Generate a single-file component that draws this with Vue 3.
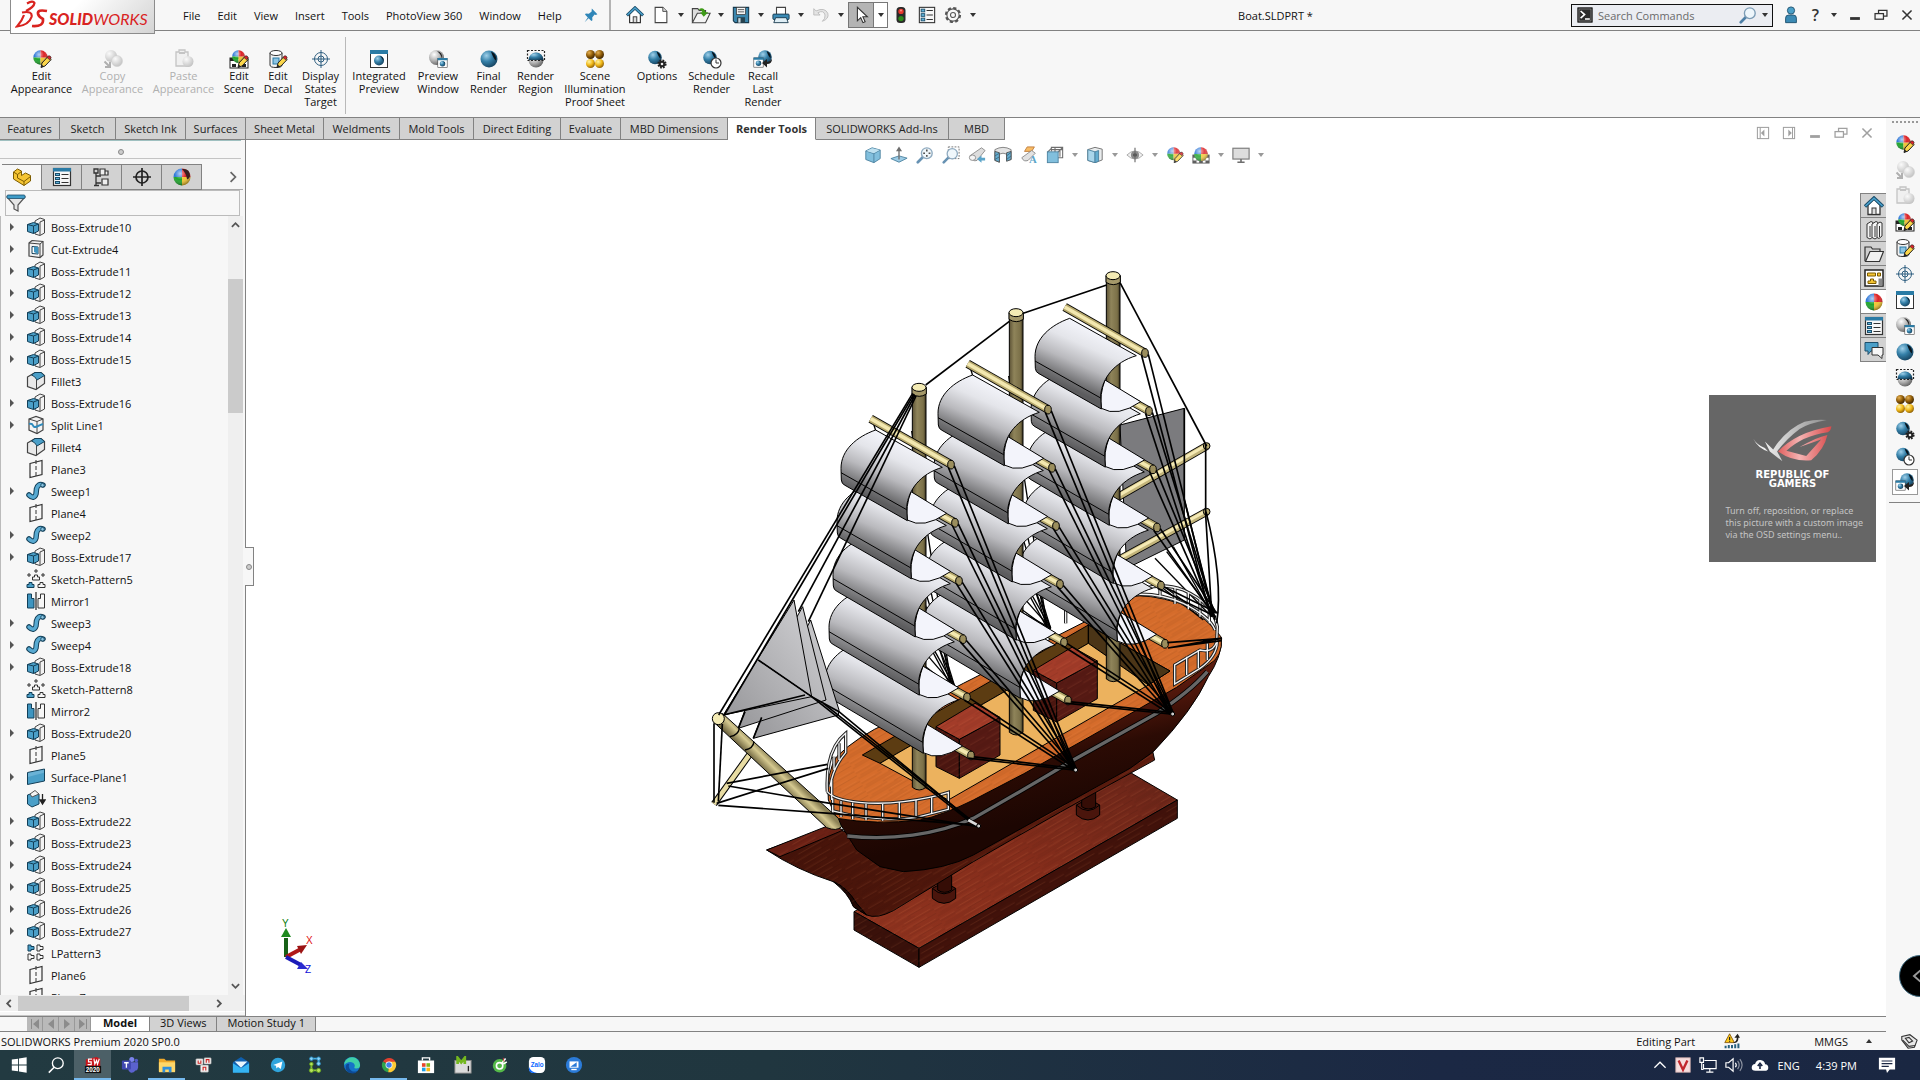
<template>
  <div class="app">
    <svg class="defs" width="0" height="0" aria-hidden="true">
      <defs>
        <radialGradient id="gBlue" cx=".35" cy=".3" r=".8">
          <stop offset="0" stop-color="#9fd0ea" /><stop offset=".45" stop-color="#3580a8" /><stop offset="1" stop-color="#123a55" />
        </radialGradient>
        <radialGradient id="gGrey" cx=".35" cy=".3" r=".8">
          <stop offset="0" stop-color="#fff" /><stop offset=".5" stop-color="#b4b4b4" /><stop offset="1" stop-color="#555" />
        </radialGradient>
        <radialGradient id="gFade" cx=".35" cy=".3" r=".8">
          <stop offset="0" stop-color="#fafafa" /><stop offset="1" stop-color="#bdbdbd" />
        </radialGradient>
        <radialGradient id="gGold" cx=".35" cy=".3" r=".8">
          <stop offset="0" stop-color="#fff3a0" /><stop offset=".5" stop-color="#f0b818" /><stop offset="1" stop-color="#7a4d00" />
        </radialGradient>
        <radialGradient id="gBrown" cx=".35" cy=".3" r=".8">
          <stop offset="0" stop-color="#e6b050" /><stop offset=".5" stop-color="#8f5c08" /><stop offset="1" stop-color="#2c1800" />
        </radialGradient>
        <radialGradient id="gShine" cx=".4" cy=".3" r=".7">
          <stop offset="0" stop-color="#fff" stop-opacity=".65" /><stop offset=".5" stop-color="#fff" stop-opacity="0" /><stop offset="1" stop-color="#000" stop-opacity=".4" />
        </radialGradient>
      </defs>

      <!-- shared parts -->
      <symbol id="p-pencil" viewBox="0 0 20 20">
        <path d="M9 18.500l1-4.500 6-6.500 3.200 3-6.200 6.500z" fill="#fbd64a" stroke="#222" stroke-width="1" />
        <path d="M15 8.500l1.500-1.700q2-.6 2.700 2l-1.500 2z" fill="#d8242c" stroke="#222" stroke-width=".6" />
        <path d="M9 18.500l.7-3 2.300 1.900z" fill="#222" />
      </symbol>
      <symbol id="i-ball" viewBox="0 0 20 20">
        <path d="M10 10V1.500A8.500 8.500 0 0 0 1.500 10Z" fill="#2f78d8" />
        <path d="M10 10H1.500A8.500 8.500 0 0 0 10 18.500Z" fill="#1fa52c" />
        <path d="M10 10V18.500A8.500 8.500 0 0 0 18.500 10Z" fill="#f2c531" />
        <path d="M10 10H18.500A8.500 8.500 0 0 0 10 1.500Z" fill="#dc2226" />
        <circle cx="10" cy="10" r="8.500" fill="url(#gShine)" />
      </symbol>
      <symbol id="p-window" viewBox="0 0 20 20">
        <rect x="1.500" y="1.500" width="17" height="17" fill="#fff" stroke="#333" />
        <rect x="1" y="1" width="18" height="4" fill="#2a7ba5" />
        <circle cx="10" cy="11.500" r="5" fill="url(#gBlue)" />
        <path d="M11 7q4 1 3.500 5-1-3-3.500-5z" fill="#0a1a26" />
      </symbol>

      <!-- title bar -->
      <symbol id="i-home" viewBox="0 0 20 20">
        <path d="M4 9v9.500h12V9l-6-6z" fill="#fff" stroke="#333" stroke-width="1.300" />
        <rect x="8" y="12" width="4" height="6.500" fill="#ddd" stroke="#333" />
        <path d="M1 10.500L10 2l9 8.500" fill="none" stroke="#1d4f6c" stroke-width="3.400" />
        <path d="M1.500 10L10 2.200 18.500 10" fill="none" stroke="#4ba3cf" stroke-width="1.500" />
      </symbol>
      <symbol id="i-new" viewBox="0 0 20 20">
        <path d="M3.500 1.500h8.500l4.500 4.500v12.500h-13z" fill="#fff" stroke="#444" stroke-width="1.200" />
        <path d="M12 1.500v4.500h4.500" fill="#ddd" stroke="#444" />
      </symbol>
      <symbol id="i-open" viewBox="0 0 22 20">
        <path d="M1.500 18V3h6l1.500 2h7v3" fill="#ddd" stroke="#444" stroke-width="1.200" />
        <path d="M1.500 18.500L7 8h14l-5 10.500z" fill="#f4f4f4" stroke="#444" stroke-width="1.200" />
        <path d="M8 4q6-4 8 3h3l-5 5-4-5h2.500q-1-3-4.500-3z" fill="#3f9b17" />
      </symbol>
      <symbol id="i-save" viewBox="0 0 20 20">
        <path d="M1.500 1.500h17v17h-15l-2-2z" fill="#3b86ad" stroke="#16384c" stroke-width="1.200" />
        <rect x="5" y="1.500" width="10" height="8" fill="#f5f5f5" stroke="#333" stroke-width=".8" />
        <path d="M6.500 4h7M6.500 6.500h7" stroke="#555" />
        <rect x="5.500" y="12.500" width="9" height="6" fill="#27434f" />
        <rect x="7" y="13.500" width="2.500" height="5" fill="#c9d7de" />
      </symbol>
      <symbol id="i-print" viewBox="0 0 20 20">
        <path d="M5 9V1.500h10V9" fill="#fff" stroke="#444" stroke-width="1.200" />
        <rect x="1" y="9" width="18" height="6" rx="1" fill="#3b8ab4" stroke="#16384c" />
        <path d="M4 13h12l2 5.500H2z" fill="#dfeef5" stroke="#16384c" />
      </symbol>
      <symbol id="i-undo" viewBox="0 0 20 20">
        <path d="M2 3v7h7L6.500 7.500Q13 4 14.500 10q.5 4-3 7 8-3 6-9Q14 1 4.500 5.500z" fill="#e4e4e4" stroke="#bbb" />
      </symbol>
      <symbol id="i-cursor" viewBox="0 0 20 20">
        <path d="M6 1.500v15l3.700-3.500 2.500 5.500 2.400-1-2.500-5.500h5z" fill="#fff" stroke="#333" stroke-width="1.200" />
      </symbol>
      <symbol id="i-light" viewBox="0 0 20 20">
        <rect x="5" y="1" width="10" height="18" rx="4" fill="#2a2a2a" />
        <circle cx="10" cy="6" r="3" fill="#e8362c" /><circle cx="10" cy="14" r="3" fill="#2e8a1c" />
        <circle cx="10" cy="5" r="1" fill="#ff9a90" />
      </symbol>
      <symbol id="i-props" viewBox="0 0 20 20">
        <rect x="1.500" y="1.500" width="17" height="17" fill="#f7f7f7" stroke="#333" stroke-width="1.200" />
        <g fill="#5fb2da" stroke="#1d4f6c"><rect x="3.500" y="3.500" width="4" height="3" /><rect x="3.500" y="8.500" width="4" height="3" /><rect x="3.500" y="13.500" width="4" height="3" /></g>
        <path d="M9.500 5h7M9.500 10h7M9.500 15h7" stroke="#333" stroke-width="1.200" />
      </symbol>
      <symbol id="i-panel" viewBox="0 0 20 20">
        <rect x="1.500" y="1.500" width="17" height="17" fill="#f7f7f7" stroke="#333" stroke-width="1.200" />
        <rect x="1" y="1" width="18" height="3.500" fill="#2a7ba5" />
        <g fill="#5fb2da" stroke="#1d4f6c"><rect x="3.500" y="6.500" width="4" height="2" /><rect x="3.500" y="10.500" width="4" height="2" /><rect x="3.500" y="14.500" width="4" height="2" /></g>
        <path d="M9.500 7.500h7M9.500 11.500h7M9.500 15.500h7" stroke="#333" stroke-width="1.200" />
      </symbol>
      <symbol id="i-gear" viewBox="0 0 20 20">
        <circle cx="10" cy="10" r="7.500" fill="none" stroke="#555" stroke-width="3" stroke-dasharray="3.400 2.490" />
        <circle cx="10" cy="10" r="6.800" fill="#f7f7f7" stroke="#555" stroke-width="1.200" />
        <circle cx="10" cy="10" r="2.800" fill="none" stroke="#555" stroke-width="1.200" />
      </symbol>
      <symbol id="i-pin" viewBox="0 0 20 20">
        <path d="M11 2l7 7-2 1-1.500-.5-3 3.500.3 3.500-1.300 1-3.500-3.500L2 19l4-6-3.500-3.500 1-1.300 3.800.3 3.500-3z" fill="#2f86b8" />
      </symbol>
      <symbol id="i-user" viewBox="0 0 20 20">
        <circle cx="10" cy="5" r="4" fill="#4ba0c8" stroke="#1d4f6c" />
        <path d="M4 18.500v-5q0-3.500 3.500-3.500h5q3.500 0 3.500 3.500v5z" fill="#3b8ab4" stroke="#1d4f6c" />
      </symbol>
      <symbol id="i-mag" viewBox="0 0 20 20">
        <path d="M8 12l-6 6" stroke="#4d7fa6" stroke-width="3" stroke-linecap="round" />
        <circle cx="12" cy="8" r="6" fill="#eef6fb" stroke="#7c9cb5" stroke-width="1.500" />
      </symbol>
      <symbol id="i-prompt" viewBox="0 0 20 20">
        <rect x="1" y="1" width="18" height="18" fill="#2a2a2a" stroke="#111" /><rect x="2.500" y="2.500" width="15" height="15" fill="none" stroke="#999" stroke-width=".8" />
        <path d="M4.500 5l5 4.500-5 4.500M10 15h6" fill="none" stroke="#fff" stroke-width="2" />
      </symbol>
      <symbol id="i-min" viewBox="0 0 20 20"><rect x="3" y="13" width="14" height="4" fill="currentColor" /></symbol>
      <symbol id="i-restore" viewBox="0 0 20 20">
        <path d="M6.500 7V3.500h12v8H14" fill="none" stroke="currentColor" stroke-width="1.800" /><rect x="1.500" y="8" width="12" height="8" fill="none" stroke="currentColor" stroke-width="1.800" />
      </symbol>
      <symbol id="i-close" viewBox="0 0 20 20"><path d="M3.500 3.500l13 13M16.500 3.500l-13 13" stroke="currentColor" stroke-width="2.200" /></symbol>
      <symbol id="i-paneL" viewBox="0 0 20 20"><rect x="2" y="2" width="16" height="16" fill="none" stroke="currentColor" stroke-width="1.500" /><path d="M6 2v16" stroke="currentColor" stroke-width="1.500" /><path d="M12 5v10l-5-5z" fill="currentColor" /></symbol>
      <symbol id="i-paneR" viewBox="0 0 20 20"><rect x="2" y="2" width="16" height="16" fill="none" stroke="currentColor" stroke-width="1.500" /><path d="M15 2v16" stroke="currentColor" stroke-width="1.500" /><path d="M9 5v10l5-5z" fill="currentColor" /></symbol>

      <!-- render tools -->
      <symbol id="i-editapp" viewBox="0 0 20 20"><use href="#i-ball" width="17" height="17" /><use href="#p-pencil" width="20" height="20" /></symbol>
      <symbol id="i-copyapp" viewBox="0 0 20 20">
        <circle cx="8" cy="7" r="6" fill="url(#gFade)" /><circle cx="14" cy="12" r="5.500" fill="url(#gFade)" stroke="#ccc" stroke-width=".5" />
        <path d="M1.500 12.500l5 5M7 13v5H2" fill="none" stroke="#b0b0b0" stroke-width="2" />
      </symbol>
      <symbol id="i-pasteapp" viewBox="0 0 20 20">
        <path d="M2 3h3V1h6v2h3v14H2z" fill="#f0f0f0" stroke="#c4c4c4" stroke-width="1.300" /><path d="M5 4h6" stroke="#c4c4c4" stroke-width="2" />
        <circle cx="14" cy="12.500" r="5.500" fill="url(#gFade)" />
      </symbol>
      <symbol id="i-editscene" viewBox="0 0 20 20">
        <rect x="1" y="9" width="18" height="10" fill="#fff" stroke="#222" /><path d="M1 9h4v3H1zM3 15h4v3H3zM15 9h4v3h-4zM13 15h4v3h-4z" fill="#222" />
        <use href="#i-ball" x="2" width="15" height="15" /><use href="#p-pencil" width="20" height="20" />
      </symbol>
      <symbol id="i-scene" viewBox="0 0 20 20">
        <rect x="1" y="10" width="18" height="9" fill="#fff" stroke="#444" /><path d="M1 10h4v3H1zM5 13h3v3H5zM1 16h4v3H1zM8 16h4v3H8zM12 13h3v3h-3zM15 10h4v3h-4zM15 16h4v3h-4z" fill="#444" />
        <use href="#i-ball" x="1" width="18" height="18" />
      </symbol>
      <symbol id="i-editdecal" viewBox="0 0 20 20">
        <path d="M2 4v12q0 2.500 6 2.500t6-2.500V4" fill="#f2f2f2" stroke="#333" /><ellipse cx="8" cy="4" rx="6" ry="2.500" fill="#fff" stroke="#333" />
        <rect x="5" y="9" width="6" height="6" fill="#8cc4e2" stroke="#2a7ba5" /><use href="#p-pencil" width="20" height="20" />
      </symbol>
      <symbol id="i-target" viewBox="0 0 20 20">
        <g fill="none" stroke="#2f5f80"><circle cx="10" cy="10" r="6.500" /><circle cx="10" cy="10" r="3" /><path d="M10 1v18M1 10h18" /></g>
      </symbol>
      <symbol id="i-prevwin" viewBox="0 0 20 20">
        <circle cx="8.500" cy="8.500" r="7.500" fill="url(#gGrey)" /><path d="M9 2q6 1 5 8-1-5-5-8z" fill="#222" /><use href="#p-window" x="9" y="8.500" width="11" height="11" />
      </symbol>
      <symbol id="i-final" viewBox="0 0 20 20">
        <circle cx="10" cy="10" r="8.500" fill="url(#gBlue)" /><path d="M12 2.500q6 2.500 5 9-2.500-1.500-5-9z" fill="#08131c" />
      </symbol>
      <symbol id="i-region" viewBox="0 0 20 20">
        <circle cx="10" cy="11" r="7.500" fill="url(#gGrey)" /><path d="M2.500 11a7.500 7.500 0 0 1 15 0z" fill="url(#gBlue)" />
        <rect x="1.500" y="1.500" width="17" height="10" fill="none" stroke="#222" stroke-dasharray="2 1.500" stroke-width="1.200" />
      </symbol>
      <symbol id="i-illum" viewBox="0 0 20 20">
        <circle cx="5.500" cy="5.500" r="4.500" fill="url(#gBrown)" /><circle cx="14.500" cy="5.500" r="4.500" fill="url(#gBrown)" />
        <circle cx="5.500" cy="14.500" r="4.500" fill="url(#gGold)" /><circle cx="14.500" cy="14.500" r="4.500" fill="url(#gGold)" />
      </symbol>
      <symbol id="i-options" viewBox="0 0 20 20">
        <use href="#i-final" width="16" height="17" /><circle cx="15" cy="15" r="3.600" fill="none" stroke="#222" stroke-width="2" stroke-dasharray="1.700 1.130" /><circle cx="15" cy="15" r="2.300" fill="#eee" stroke="#222" stroke-width="2" />
      </symbol>
      <symbol id="i-schedule" viewBox="0 0 20 20">
        <use href="#i-final" width="16" height="17" /><circle cx="14" cy="14" r="5" fill="#fff" stroke="#333" stroke-width="1.200" /><path d="M14 10.500V14h3" fill="none" stroke="#333" />
      </symbol>
      <symbol id="i-recall" viewBox="0 0 20 20">
        <use href="#i-final" x="4" width="16" height="16" /><use href="#p-window" y="8" width="11" height="11" /><path d="M19 10q0 5-5 5v3.500L9 14l5-4v3q3 0 5-3z" fill="#222" />
      </symbol>

      <!-- feature tree -->
      <symbol id="t-boss" viewBox="0 0 20 20">
        <path d="M9 4l5-3 4.500 1.500V16L14 18.500 9 17z" fill="#f3f3f3" stroke="#444" /><path d="M14 5l4.500-2M14 5v13" stroke="#444" fill="none" />
        <path d="M1.500 7.500l6-2 5 1.500v7l-5 2.500-6-2z" fill="#4a9fc8" stroke="#123f58" /><path d="M1.500 7.500l6 1.500 5-2M7.500 9v7.500" fill="none" stroke="#123f58" />
      </symbol>
      <symbol id="t-cut" viewBox="0 0 20 20">
        <path d="M3 4l3-2.500 11 1V16l-3 2.500L3 17z" fill="#f3f3f3" stroke="#444" stroke-width="1.200" /><path d="M3 4l11 1v13M14 5l3-2.500" fill="none" stroke="#444" />
        <path d="M6 7.500l6 .5v7l-6-.5z" fill="#fff" stroke="#123f58" /><path d="M8 7.800l4 .2v7l-4-2z" fill="#3f95c0" />
      </symbol>
      <symbol id="t-fillet" viewBox="0 0 20 20">
        <path d="M1.500 6L9 1.500h6l3.500 3v8L10 18.500l-8.500-3z" fill="#e9e9e9" stroke="#444" stroke-width="1.200" />
        <path d="M9 1.500h6l3.500 3L11 9Q9 5 5.500 4z" fill="#4a9fc8" stroke="#123f58" /><path d="M10.500 9v9" stroke="#444" />
      </symbol>
      <symbol id="t-split" viewBox="0 0 20 20">
        <path d="M3 4l7-2.500L17 4v11l-6 3.500L3 15z" fill="#f3f3f3" stroke="#444" stroke-width="1.200" /><path d="M3 4l8 2.500L17 4M11 6.500v12" fill="none" stroke="#444" />
        <path d="M3 9q3-1 4 1.500t4 1 6-2.500" fill="none" stroke="#2f8abb" stroke-width="2" />
      </symbol>
      <symbol id="t-plane" viewBox="0 0 20 20">
        <path d="M4 4.500L16 1.500v14L4 18.500z" fill="none" stroke="#333" stroke-width="1.200" /><path d="M10 1v18" stroke="#333" stroke-dasharray="4 2" />
      </symbol>
      <symbol id="t-sweep" viewBox="0 0 20 20">
        <path d="M3 14q5 5 7-1l.5-5Q12 2 17 4" fill="none" stroke="#123f58" stroke-width="5.500" stroke-linecap="round" />
        <path d="M3 14q5 5 7-1l.5-5Q12 2 17 4" fill="none" stroke="#58aad2" stroke-width="3.500" stroke-linecap="round" />
        <circle cx="16.500" cy="4.200" r="1.800" fill="#8ac6e4" stroke="#123f58" stroke-width=".8" />
      </symbol>
      <symbol id="t-skpat" viewBox="0 0 20 20">
        <path d="M1 18.500v-3h2v-2h3v2h2v3z" fill="#4a9fc8" stroke="#123f58" /><g fill="#f7f7f7" stroke="#333"><path d="M12 18.500v-3h2v-2h3v2h2v3zM6.500 11V8h2V6h3v2h2v3z" /><path d="M9 1h2v2H9zM2 5h2v2H2zM16 5h2v2h-2z" /></g>
      </symbol>
      <symbol id="t-mirror" viewBox="0 0 20 20">
        <path d="M1.500 3h4v4.500H8V17H1.500z" fill="#3f95c0" stroke="#123f58" /><path d="M10 1v18" stroke="#222" stroke-width="1.200" /><path d="M18.500 3h-4v4.500H12V17h6.500z" fill="#f7f7f7" stroke="#333" />
      </symbol>
      <symbol id="t-surf" viewBox="0 0 20 20"><path d="M1.500 5.500L18.500 2v12L1.500 17.500z" fill="#4a9fc8" stroke="#123f58" /><path d="M2 6l16-3.300v3L2 10z" fill="#8ac6e4" opacity=".5" /></symbol>
      <symbol id="t-thicken" viewBox="0 0 20 20">
        <path d="M1.500 6L7 4l6 1v10l-7 3-4.500-3z" fill="#4a9fc8" stroke="#123f58" /><path d="M4 5l5-3.500 4 3.500-7 3z" fill="#f3f3f3" stroke="#555" /><path d="M16.500 5v9M14 11l2.500 4 2.500-4z" stroke="#222" fill="#222" stroke-width="1.300" />
      </symbol>
      <symbol id="t-lpat" viewBox="0 0 20 20">
        <path d="M2 2h3v1.500h3v3H5V8H2z" fill="#4a9fc8" stroke="#123f58" /><g fill="#f7f7f7" stroke="#333"><path d="M11 2h3v1.500h3v3h-3V8h-3zM2 11h3v1.500h3v3H5V17H2zM11 11h3v1.500h3v3h-3V17h-3z" /></g>
      </symbol>
      <symbol id="i-part" viewBox="0 0 20 20">
        <path d="M1.500 5l4-3 4 2v4.500l4-2.500 5 2.500v5.500L12 18.500 1.500 12z" fill="#f5c534" stroke="#7d5c00" /><path d="M1.500 5l4 2.500 4-3M5.500 7.500v3.500l6.500 3.500 6.500-5M12 14.500v4" fill="none" stroke="#7d5c00" />
      </symbol>
      <symbol id="i-config" viewBox="0 0 20 20">
        <path d="M2 2h4v4H2zM4 6v12M4 9h5M4 16h5M2 18.500h5" fill="none" stroke="#333" stroke-width="1.300" /><g fill="#eee" stroke="#333" stroke-width="1.200"><path d="M8 2h5v6H8zM10 12h6v6h-6zM13 4h3v4h-3z" /></g>
      </symbol>
      <symbol id="i-cross" viewBox="0 0 20 20"><g fill="none" stroke="#222" stroke-width="1.700"><circle cx="10" cy="10" r="6" /><path d="M10 1v18M1 10h18" /></g></symbol>
      <symbol id="i-appear" viewBox="0 0 20 20"><use href="#i-ball" width="20" height="20" /><path d="M10 2q8-1 8 7-1 4-3 3-1-6-5-10z" fill="#3a2020" /></symbol>
      <symbol id="i-filter" viewBox="0 0 20 20">
        <path d="M1 4h18l-7 8v6l-4-2v-4z" fill="#e6e6e6" stroke="#555" stroke-width="1.200" /><rect x="1" y="2" width="18" height="3.500" rx="1" fill="#3f9cc8" stroke="#1d4f6c" stroke-width=".8" />
      </symbol>

      <!-- heads-up view toolbar -->
      <symbol id="v-cube" viewBox="0 0 20 20"><path d="M2 5.500L9 2l9 2.500v9.500L11 18.500 2 15z" fill="#6cb4d8" stroke="#2c6c8f" /><path d="M2 5.500l9 3v10M11 8.500l7-4" fill="none" stroke="#2c6c8f" /><path d="M2.500 5.500L9 2.500l8.500 2-6.500 3.500z" fill="#b5dcee" /></symbol>
      <symbol id="v-normal" viewBox="0 0 20 20"><path d="M1 14l9-3 9 2.500-9 4.500z" fill="#8cc4e2" stroke="#2c6c8f" /><path d="M10 15V3M8 5l2-3 2 3z" stroke="#555" stroke-width="1.500" fill="#555" /></symbol>
      <symbol id="v-fit" viewBox="0 0 20 20"><use href="#i-mag" width="20" height="20" /><path d="M12 4v2M12 10v2M8 8h2M14 8h2" stroke="#333" stroke-width="1.800" /></symbol>
      <symbol id="v-area" viewBox="0 0 20 20"><rect x="7" y="1" width="12" height="13" fill="none" stroke="#555" stroke-dasharray="2 1.500" /><use href="#i-mag" y="1" width="19" height="19" /></symbol>
      <symbol id="v-prev" viewBox="0 0 20 20"><path d="M2 11L15 2l4 3-9 11q-5 2-8-5z" fill="#d8d8d8" stroke="#777" /><ellipse cx="5" cy="13" rx="3.500" ry="3" fill="#f4f4f4" stroke="#777" /><path d="M19 13v3h-4v2.500L10 14.500l5-4V13z" fill="#3f95c0" /></symbol>
      <symbol id="v-section" viewBox="0 0 20 20"><path d="M1 4q9-5 18 0v11l-5 1V9q-4-2-8 0v9l-5-2z" fill="#e0e0e0" stroke="#666" /><path d="M1 6l5 1.500V18l-5-2zM14 7.500L19 6v9l-5 2z" fill="#4a9fc8" stroke="#333" /><path d="M1 11l5-3M1 15l5-3M14 11l5-4M14 15l5-4" stroke="#1b4f6b" /></symbol>
      <symbol id="v-orient" viewBox="0 0 20 20"><path d="M6 6V1.500h12.500V13H13M1.500 7l5-5M13 7l5-5M10 1.500v6M6 4h12M15.500 4v8" fill="none" stroke="#555" stroke-width="1.200" /><rect x="1.500" y="6.500" width="12" height="12" fill="#6cb4d8" stroke="#2c6c8f" /></symbol>
      <symbol id="v-style" viewBox="0 0 20 20"><path d="M2 4l8-2.500 8 2v12l-8 3-8-2.500z" fill="#e6e9ea" stroke="#555" /><path d="M2 4l8 2.500v12L2 16z" fill="#9cd0e8" stroke="#2c6c8f" /><path d="M10 6.500L14 5v12l-4 1.500z" fill="#4a9fc8" stroke="#2c6c8f" /></symbol>
      <symbol id="v-eye" viewBox="0 0 20 20"><path d="M1 10q9-9 18 0-9 9-18 0z" fill="#eee" stroke="#999" /><circle cx="10" cy="10" r="4.500" fill="#777" /><circle cx="10" cy="10" r="2" fill="#222" /><path d="M10 2v16" stroke="#555" stroke-width="1.300" /></symbol>
      <symbol id="v-monitor" viewBox="0 0 20 20"><rect x="1" y="2.500" width="18" height="12" fill="#d8d8d8" stroke="#666" stroke-width="1.300" /><path d="M10 14.500V18M6 18h8" stroke="#555" stroke-width="1.800" /></symbol>

      <!-- task pane -->
      <symbol id="k-books" viewBox="0 0 20 20"><g fill="#f4f4f4" stroke="#333"><path d="M3 4l4-2.500 2 1V17L6 19l-3-1.500z" /><path d="M8 4l4-2.500 2 1V17l-3 2-3-1.500z" /><path d="M13 4l3-2 2 1v13l-3 2.500-2-1z" /></g><path d="M6 6v11M11 6v11M15.500 6v11" stroke="#333" /></symbol>
      <symbol id="k-folder" viewBox="0 0 20 20"><path d="M1 17V3h6l1.500 2H16v3" fill="#d0d0d0" stroke="#333" stroke-width="1.200" /><path d="M1.500 17.500L6 7.500h13.500l-4 10z" fill="#f1f1f1" stroke="#333" stroke-width="1.200" /></symbol>
      <symbol id="k-palette" viewBox="0 0 20 20"><rect x="1" y="2" width="18" height="16" fill="#fff" stroke="#222" stroke-width="1.500" /><path d="M3.500 5h8v3h-8zM13.500 5h3v3h-3zM4 15.500v-2.500h2.500v-2h3v2H12v2.500z" fill="#f5c534" stroke="#7d5c00" /><rect x="14.500" y="10.500" width="4" height="7.500" fill="#888" /></symbol>
      <symbol id="k-chat" viewBox="0 0 20 20"><path d="M1 2.500h13v8.500H7L4 14.500V11H1z" fill="#4a9fc8" stroke="#1d4f6c" /><path d="M8 7.500h11v7.500h-1v3.500L14 15H8z" fill="#f7f7f7" stroke="#333" /></symbol>

      <!-- taskbar -->
      <symbol id="w-start" viewBox="0 0 20 20"><path d="M2 4l7-1v6.500H2zM10 2.800L18.500 1.500v8H10zM2 10.500h7V17l-7-1zM10 10.500h8.500v8L10 17.200z" fill="#fff" /></symbol>
      <symbol id="w-search" viewBox="0 0 20 20"><circle cx="12" cy="8" r="6" fill="none" stroke="#fff" stroke-width="1.500" /><path d="M8 12.500L2 18.500" stroke="#fff" stroke-width="1.700" /></symbol>
      <symbol id="w-teams" viewBox="0 0 20 20"><circle cx="12" cy="4" r="2.800" fill="#7b83eb" /><circle cx="17" cy="5" r="2" fill="#5059c9" /><path d="M8 7h11v6q-1 4-3 3-2 3-5 2.500-3-1-3-4z" fill="#5b62cf" /><rect x="1" y="5" width="10" height="10" rx="1" fill="#4048b0" /><path d="M3.500 7.500h5M6 7.500v5.500" stroke="#fff" stroke-width="1.500" /></symbol>
      <symbol id="w-explorer" viewBox="0 0 20 20"><path d="M1 3h6l2 2h10v12H1z" fill="#f0a92a" /><path d="M1 7h18v11H1z" fill="#ffd769" /><path d="M5 18v-6h10v6h-3v-3H8v3z" fill="#2f8fdd" /></symbol>
      <symbol id="w-keys" viewBox="0 0 20 20"><g fill="#f1f1f1" stroke="#888" stroke-width=".6"><rect x="1" y="3" width="8" height="7" rx="1" /><rect x="10" y="2" width="8" height="7" rx="1" /><rect x="6" y="10" width="9" height="8" rx="1" /></g><path d="M3.500 5v3h3V5M12.500 7.500V4h3v3.500M9 16v-3.500h3V16" fill="none" stroke="#c22" stroke-width="1.200" /></symbol>
      <symbol id="w-mail" viewBox="0 0 20 20"><path d="M1 7l9-6 9 6v11H1z" fill="#0f5fae" /><path d="M1 8l9 5.500L19 8v10.500H1z" fill="#35b4f2" /><path d="M3 6h14l-7 7z" fill="#e9f6fd" /></symbol>
      <symbol id="w-tele" viewBox="0 0 20 20"><circle cx="10" cy="10" r="9" fill="#2fa4dc" /><path d="M4 10l11.500-4.500L13.500 15l-3.500-2.500-2 2-.5-3.500z" fill="#fff" /></symbol>
      <symbol id="w-dots" viewBox="0 0 20 20"><path d="M6 9v7h8" fill="none" stroke="#8cc63f" stroke-width="2" /><path d="M6 3h8v6" fill="none" stroke="#43b0e6" stroke-width="2" /><g fill="#8fd6f8" stroke="#2a8fc4"><circle cx="6" cy="3" r="2" /><circle cx="14" cy="3" r="2" /><circle cx="14" cy="8.500" r="2" /></g><g fill="#b6e35a" stroke="#5f9c1c"><circle cx="6" cy="9" r="2" /><circle cx="6" cy="16" r="2.300" /><circle cx="14" cy="16" r="2.300" /></g></symbol>
      <symbol id="w-edge" viewBox="0 0 20 20"><circle cx="10" cy="10" r="9" fill="#1673c8" /><path d="M1.500 7.500A9 9 0 0 1 19 10q0 4-4.500 4-2 0-2-1.500 1-1 .5-2.500Q11 6 6 7q-3 .5-4.500 3z" fill="#3fd0a8" /><path d="M7 9q-2 5 3 8 4 1 7-1-4 5-10 2.500Q1 15 4 9.500 5.500 8 7 9z" fill="#0c4a96" /></symbol>
      <symbol id="w-chrome" viewBox="0 0 20 20"><path d="M10 10L2.500 5.500A9 9 0 0 1 18 6z" fill="#e3402f" /><path d="M10 10h-1L2.300 5.500A9 9 0 0 0 9 19z" fill="#2fa24c" /><path d="M10 10l-1 9A9 9 0 0 0 18 6h-8z" fill="#fcc934" /><circle cx="10" cy="10" r="4.300" fill="#fff" /><circle cx="10" cy="10" r="3.400" fill="#3f7ee8" /></symbol>
      <symbol id="w-store" viewBox="0 0 20 20"><path d="M6 5V2h8v3" fill="none" stroke="#fff" stroke-width="1.500" /><rect x="1" y="5" width="18" height="14" fill="#fff" /><path d="M5.500 8h4v4h-4z" fill="#e8452c" /><path d="M10.500 8h4v4h-4z" fill="#7fb51c" /><path d="M5.500 13h4v4h-4z" fill="#1f9fe6" /><path d="M10.500 13h4v4h-4z" fill="#fbb714" /></symbol>
      <symbol id="w-m" viewBox="0 0 20 20"><rect x="1" y="5" width="18" height="14" fill="#dcdcdc" stroke="#888" /><path d="M4 9V2l4 5 4-5v7" fill="none" stroke="#74b81f" stroke-width="3" /><path d="M16 11v6" stroke="#222" stroke-width="1.500" /></symbol>
      <symbol id="w-coc" viewBox="0 0 20 20"><circle cx="9.500" cy="11" r="8.500" fill="#54b948" /><circle cx="9.500" cy="11" r="4" fill="none" stroke="#fff" stroke-width="2" /><path d="M12 8l5-6M14 9l4.500-3" stroke="#fff" stroke-width="2" /><path d="M14 1l1 5" stroke="#d33" /></symbol>
      <symbol id="w-blue" viewBox="0 0 20 20"><circle cx="10" cy="10" r="9" fill="#2b7bd8" /><path d="M5 6h10v7H5z" fill="#fff" /><path d="M6 12l7-5v5z" fill="#2b7bd8" /><path d="M7 15h6" stroke="#fff" stroke-width="1.500" /></symbol>
      <symbol id="s-v" viewBox="0 0 20 20"><rect x="1" y="1" width="18" height="18" fill="#f6dede" stroke="#caa" /><path d="M4.500 4.500L10 16l5.500-11.500" fill="none" stroke="#c1272d" stroke-width="3" /></symbol>
      <symbol id="s-net" viewBox="0 0 20 20"><g fill="none" stroke="#fff" stroke-width="1.300"><path d="M6 5h13v9H5V9M12 14v4M8 18h8" /><path d="M1 2h4v5H1zM3 7v8h2" /></g></symbol>
      <symbol id="s-vol" viewBox="0 0 20 20"><g fill="none" stroke="#fff" stroke-width="1.300"><path d="M1 7.500h3l5-4.500v14l-5-4.500H1z" /><path d="M11.500 7.500q2 2.500 0 5" /><path d="M14 5.500q3.500 4.500 0 9M16.500 3.500q5 6.500 0 13" opacity=".5" /></g></symbol>
      <symbol id="s-cloud" viewBox="0 0 20 20"><path d="M5 16.500Q.5 16.500.8 12.500q.3-3 3.700-3.500Q6 4 10.500 4.500t5.200 4.700q3.500.3 3.500 3.800t-4 3.500z" fill="#fff" /><path d="M10 14.500V10M7.500 11L10 8l2.500 3" fill="none" stroke="#1b2744" stroke-width="1.800" /></symbol>
      <symbol id="s-note" viewBox="0 0 20 20"><path d="M1 2h18v13h-6l-3 4-1-4H1z" fill="#fff" /><path d="M4 5.500h12M4 8.500h12M4 11.500h8" stroke="#1b2744" stroke-width="1.200" /></symbol>
    </svg>

    <header class="titlebar">
      <div class="logo">
        <svg viewBox="0 0 34 32" class="ds" fill="none" stroke="#d9231f">
          <path d="M12 3.500Q18 0 19.500 3 19 7 11 11" stroke-width="2.200" />
          <path d="M7 12.500Q18 10.500 16.500 17 14 25 2 26.500 7 21 9 15" stroke-width="2.200" />
          <path d="M32 11Q22 9 23 14 24 17 28 19 29 27 17 26" stroke-width="2.600" />
        </svg>
        <span class="brand"><b>SOLID</b>WORKS</span>
      </div>
      <nav class="menu">
        <button v-for="m in menus" :key="m">{{ m }}</button>
        <button aria-label="Pin menu"><svg class="i16"><use href="#i-pin" /></svg></button>
      </nav>
      <div class="quick">
        <template v-for="q in quick" :key="q.icon">
          <button :class="['qbtn', { sel: q.icon === 'i-cursor' }]" :aria-label="q.label"><svg :class="q.icon === 'i-open' ? 'i20' : 'i18'"><use :href="'#' + q.icon" /></svg></button>
          <button v-if="q.drop" :class="['qdrop', { boxed: q.icon === 'i-cursor' }]" :aria-label="q.label + ' menu'"><i class="caret" /></button>
        </template>
      </div>
      <div class="doc-title">Boat.SLDPRT *</div>
      <div class="search">
        <svg class="i16"><use href="#i-prompt" /></svg>
        <input type="text" placeholder="Search Commands" aria-label="Search Commands" />
        <svg class="i18"><use href="#i-mag" /></svg>
        <i class="caret" />
      </div>
      <div class="winctl">
        <button aria-label="Login"><svg class="i18"><use href="#i-user" /></svg></button>
        <button class="help">?</button>
        <i class="caret" />
        <button aria-label="Minimize"><svg class="i14"><use href="#i-min" /></svg></button>
        <button aria-label="Restore"><svg class="i14"><use href="#i-restore" /></svg></button>
        <button aria-label="Close"><svg class="i14"><use href="#i-close" /></svg></button>
      </div>
    </header>

    <section class="ribbon">
      <div v-for="(group, gi) in ribbon" :key="gi" class="rgroup">
        <button v-for="r in group" :key="r.text" class="rbtn" :disabled="r.off" :style="{ width: r.w + 'px' }">
          <svg class="i20"><use :href="'#' + r.icon" /></svg>
          <span>{{ r.text }}</span>
        </button>
      </div>
    </section>

    <div class="main">
      <div class="work">
        <div class="cmdtabs">
          <button v-for="t in tabs" :key="t.name" :class="{ active: t.name === 'Render Tools' }" :style="{ width: t.w + 'px' }">{{ t.name }}</button>
          <div class="docctl">
            <button v-for="d in ['paneL', 'paneR', 'min', 'restore', 'close']" :key="d" :aria-label="d"><svg class="i14"><use :href="'#i-' + d" /></svg></button>
          </div>
        </div>

        <div class="mid">
          <aside class="panel">
            <div class="grip"><i class="dot" /></div>
            <div class="ptabs">
              <button v-for="(p, i) in ptabs" :key="p" :class="{ active: i === 0 }" :aria-label="p"><svg class="i20"><use :href="'#' + p" /></svg></button>
              <span class="more"><svg viewBox="0 0 10 14" width="8" height="12"><path d="M2 1l6 6-6 6" fill="none" stroke="#666" stroke-width="2.200" /></svg></span>
            </div>
            <div class="filter">
              <svg class="i20"><use href="#i-filter" /></svg>
              <input type="text" aria-label="Filter" />
            </div>
            <div class="treewrap">
              <ul class="tree">
                <li v-for="(f, i) in features" :key="i">
                  <i :class="['exp', { none: !f.open }]" />
                  <svg class="i20"><use :href="'#t-' + f.icon" /></svg>
                  <span>{{ f.name }}</span>
                </li>
              </ul>
              <div class="vbar">
                <svg viewBox="0 0 10 8" width="9" height="8"><path d="M1 6l4-4 4 4" fill="none" stroke="#555" stroke-width="2" /></svg>
                <i class="vthumb" />
                <svg viewBox="0 0 10 8" width="9" height="8"><path d="M1 2l4 4 4-4" fill="none" stroke="#555" stroke-width="2" /></svg>
              </div>
            </div>
            <div class="hbar">
              <svg viewBox="0 0 8 10" width="8" height="9"><path d="M6 1L2 5l4 4" fill="none" stroke="#555" stroke-width="2" /></svg>
              <i class="hthumb" />
              <svg viewBox="0 0 8 10" width="8" height="9"><path d="M2 1l4 4-4 4" fill="none" stroke="#555" stroke-width="2" /></svg>
            </div>
            <div class="pfoot" />
            <button class="splitter" aria-label="Collapse panel"><i class="dot" /></button>
          </aside>

          <main class="canvas">
            <div class="viewbar">
              <template v-for="v in views" :key="v.icon">
                <button :aria-label="v.icon">
                  <svg v-if="v.icon === 'v-annot'" class="i18" viewBox="0 0 20 20">
                    <path d="M8 1h8l-3 5H5z" fill="#f7b04a" stroke="#b3651a" /><path d="M2 13L13 5l4 3-8 8q-5 2-7-3z" fill="#ddd" stroke="#777" />
                    <text class="annot-a" x="10" y="19">A</text>
                  </svg>
                  <svg v-else class="i18"><use :href="'#' + v.icon" /></svg>
                </button>
                <i v-if="v.drop" class="caret grey" />
              </template>
            </div>

            <svg class="ship" viewBox="42 -999 1590 2130">
              <defs>
                <linearGradient id="sail" x1=".55" y1=".1" x2=".24" y2=".72">
                  <stop offset="0" stop-color="#f4f5fb" /><stop offset=".3" stop-color="#e4e5ea" /><stop offset=".6" stop-color="#b9b9bd" /><stop offset=".9" stop-color="#6e6e70" /><stop offset="1" stop-color="#5c5c5e" />
                </linearGradient>
                <linearGradient id="pole"><stop offset="0" stop-color="#5d5336" /><stop offset=".35" stop-color="#8f845a" /><stop offset=".8" stop-color="#7b7048" /><stop offset="1" stop-color="#3b3420" /></linearGradient>
                <linearGradient id="jib" x1="1" y1="0" x2="0" y2="1"><stop offset="0" stop-color="#d0d0d3" /><stop offset="1" stop-color="#98989b" /></linearGradient>
                <linearGradient id="hull" x1=".45" y1=".35" x2=".6" y2=".75"><stop offset="0" stop-color="#5a1a0d" /><stop offset=".45" stop-color="#2b0b04" /><stop offset="1" stop-color="#1c0602" /></linearGradient>
                <linearGradient id="keel" x1="0" y1="0" x2="1" y2="0"><stop offset="0" stop-color="#441309" /><stop offset="1" stop-color="#5e1c0e" /></linearGradient>
                <linearGradient id="base" x1="0" y1="1" x2="1" y2="0"><stop offset="0" stop-color="#91341f" /><stop offset=".5" stop-color="#852d1b" /><stop offset="1" stop-color="#672418" /></linearGradient>
                <linearGradient id="sprit" gradientUnits="userSpaceOnUse" x1="250" y1="540" x2="282" y2="508"><stop offset="0" stop-color="#6e643f" /><stop offset=".6" stop-color="#d5c990" /><stop offset="1" stop-color="#8d8256" /></linearGradient>
                <pattern id="grain" width="170" height="34" patternUnits="userSpaceOnUse" patternTransform="rotate(-30)">
                  <path d="M0 3h110M60 12h110M0 20h70M90 27h80M10 31h90" stroke="#000" stroke-width="2" opacity=".1" /><path d="M70 7h90M0 15h50M50 23h90" stroke="#ff9a60" stroke-width="2" opacity=".14" />
                </pattern>
              </defs>

              <!-- stand -->
              <g stroke="#000" stroke-width="3" stroke-linejoin="round">
                <path d="M492 935L1290 500 1325 520 1462 600 687 1045z" fill="url(#base)" />
                <path d="M492 935L687 1045V1102L492 990z" fill="#3a110a" />
                <path d="M687 1045L1462 600V655L687 1102z" fill="#42120a" />
                <path d="M492 935L1290 500 1325 520 1462 600V655L687 1102 492 990z" fill="url(#grain)" stroke="none" />
                <g v-for="p in [[727, 870], [1159, 620]]" :key="p[0]" :transform="`translate(${p[0]} ${p[1]})`">
                  <path d="M0 -5V25Q35 55 70 25V-5Q35 -30 0 -5z" fill="#4a150c" /><path d="M0 -5Q35 28 70 -5" fill="none" />
                  <path d="M16 -45V0Q36 14 58 0V-45z" fill="#350d06" />
                </g>
              </g>

              <!-- keel and hull -->
              <g stroke="#000" stroke-width="3" stroke-linejoin="round">
                <path d="M230 750L420 680 480 700 570 800 1385 440 1394 480Q1100 640 850 785L610 932Q560 958 530 945L492 922Q470 860 430 845 320 810 230 750z" fill="url(#keel)" />
                <path d="M430 845Q470 860 500 910L530 945 490 920Q475 880 430 845z" fill="#200703" />
                <path d="M230 750L420 675 460 690 270 770z" fill="#6c2115" />
                <path d="M230 750L420 680 480 700 570 800 1385 440 1394 480Q1100 640 850 785L610 932Q560 958 530 945L492 922Q470 860 430 845 320 810 230 750z" fill="url(#grain)" stroke="none" />
                <path d="M1595 115Q1595 170 1555 230 1510 330 1390 455L1320 505 850 765Q770 808 640 815L570 800 500 750 440 655 700 600 1460 230z" fill="url(#hull)" />
                <path d="M415 600Q408 520 440 470 500 410 600 365L820 250 1195 60 1320 -10Q1370 -20 1470 10 1560 60 1594 112 1600 170 1555 195L1460 262 1200 410 1000 522 850 600Q760 645 690 660 560 675 440 655z" fill="#d56c2b" />
                <path d="M415 600Q408 520 440 470 500 410 600 365L820 250 1195 60 1320 -10Q1370 -20 1470 10 1560 60 1594 112 1600 170 1555 195L1460 262 1200 410 1000 522 850 600Q760 645 690 660 560 675 440 655z" fill="url(#grain)" stroke="none" />
                <path d="M517 465L1195 75 1440 213 1375 255 1195 130 570 490z" fill="#5c3c12" />
                <path d="M1195 75L1440 213 1375 255 1195 130z" fill="#4b3517" />
                <path d="M570 490L1195 130 1375 255 775 600z" fill="#ecb25e" />
                <path d="M1195 75V130" />
              </g>
              <path d="M472 708C600 722 740 705 850 655Q1000 570 1150 480L1400 340Q1500 275 1552 215" fill="none" stroke="#000" stroke-width="15" />
              <path d="M472 708C600 722 740 705 850 655Q1000 570 1150 480L1400 340Q1500 275 1552 215" fill="none" stroke="#666" stroke-width="10" />

              <!-- cabins -->
              <g v-for="c in [[0, 0], [292, -169]]" :key="c[0]" :transform="`translate(${c[0]} ${c[1]})`" stroke="#000" stroke-width="3" stroke-linejoin="round">
                <path d="M738 380V500L808 535V418z" fill="#4c1610" />
                <path d="M808 418L930 352V465L808 535z" fill="#571a14" />
                <path d="M738 380L855 310 930 352 808 418z" fill="#a33c29" />
                <path d="M738 380L855 310 930 352V465L808 535 738 500z" fill="url(#grain)" stroke="none" />
              </g>

              <!-- far side rigging -->
              <g stroke="#000" stroke-width="4">
                <path v-for="(d, i) in farRopes" :key="i" :d="d" fill="none" />
              </g>

              <!-- stern sail and gaffs -->
              <g transform="translate(870 -1050)">
                <path d="M420 525L613 475V870L440 955z" fill="#7b7b7e" stroke="#000" stroke-width="3" />
                <g v-for="g in [[415, 740, 680, 588], [415, 930, 680, 785]]" :key="g[1]">
                  <path :d="`M${g[0]} ${g[1]}L${g[2]} ${g[3]}`" stroke="#000" stroke-width="24" />
                  <path :d="`M${g[0]} ${g[1]}L${g[2]} ${g[3]}`" stroke="#c2b47a" stroke-width="19" />
                  <path :d="`M${g[0]} ${g[1] - 3}L${g[2]} ${g[3] - 3}`" stroke="#f4e9b4" stroke-width="9" />
                  <circle :cx="g[2]" :cy="g[3]" r="10" fill="#b5a86e" stroke="#000" stroke-width="3" />
                </g>
              </g>

              <!-- rails -->
              <g v-for="s in [{ c: '#222', w: 10 }, { c: '#f4f4f4', w: 4 }]" :key="s.c" :stroke="s.c" :stroke-width="s.w" fill="none">
                <path d="M412 575C440 610 560 615 640 605Q720 595 775 577V628L680 652Q560 668 425 632" />
                <path d="M428 595v45M453 603v48M488 608v50M528 611v50M578 612v50M628 606v50M678 600v50M725 592v50" />
                <path d="M412 575Q405 450 467 400V458Q430 500 420 560M425 540v60M432 470v40M447 430v50" />
                <path d="M1315 -15Q1400 -60 1480 -30 1570 10 1582 80L1580 125Q1570 160 1530 150L1454 195V252L1530 205Q1580 170 1582 125" />
                <path d="M1315 -15Q1400 -25 1480 10 1560 50 1575 90M1410 -48v40M1455 -38v50M1495 -22v50M1530 0v50M1558 20v50M1490 170v55M1525 150v55M1552 130v50" />
                <path d="M1127 30v40" />
              </g>

              <!-- masts with sails, aft to fore -->
              <g v-for="m in masts" :key="m.x" :transform="`translate(${m.x} ${m.y - 1050})`">
                <path :d="`M667 ${m.top}H708V${m.foot}Q688 ${m.foot + 16} 667 ${m.foot}z`" fill="url(#pole)" stroke="#000" stroke-width="3" />
                <path :d="`M666 ${m.top}v20Q688 ${m.top + 34} 709 ${m.top + 20}v-20z`" fill="#a5996a" stroke="#000" stroke-width="3" />
                <ellipse cx="687" :cy="m.top" rx="21" ry="12" fill="#f4ebb4" stroke="#000" stroke-width="3" />
                <g v-for="s in sails" :key="s.n" stroke="#000" stroke-width="3" stroke-linejoin="round">
                  <template v-if="s.cloth">
                    <path :d="s.inner" fill="#f3f4fb" />
                    <path :d="s.cloth" fill="url(#sail)" />
                    <path :d="s.seam" />
                  </template>
                  <path :d="s.spar" stroke-width="26" />
                  <path :d="s.spar" stroke="#b5a76c" stroke-width="21" />
                  <path :d="s.spar" stroke="#f3e8b0" stroke-width="11" />
                  <ellipse :cx="s.ex" :cy="s.ey" rx="10" ry="13" fill="#9b8e5d" />
                </g>
              </g>

              <!-- bow sails -->
              <g stroke="#000" stroke-width="3" fill="url(#jib)" stroke-linejoin="round">
                <path d="M362 60L447 330 445 345 190 415 215 350z" />
                <path d="M338 20L408 300 145 385 165 330z" />
                <path d="M312 0L365 290 100 345z" />
                <path d="M205 180L365 290" />
              </g>

              <!-- bowsprit -->
              <path d="M72 612L185 455" stroke="#000" stroke-width="20" /><path d="M72 612L185 455" stroke="#e8dca2" stroke-width="14" />
              <path d="M72 367L410 683Q440 695 455 680L445 655 97 340z" fill="url(#sprit)" stroke="#000" stroke-width="3" />
              <path d="M120 410Q145 405 148 385M165 450Q190 445 192 425" fill="none" stroke="#000" stroke-width="4" />
              <circle cx="85" cy="356" r="18" fill="#f4ebb4" stroke="#000" stroke-width="3" />

              <!-- near rigging -->
              <g stroke="#000" stroke-width="5" fill="none">
                <path v-for="(d, i) in ropes" :key="i" :d="d" />
              </g>
              <g fill="#ccc" stroke="#000" stroke-width="3"><circle cx="866" cy="678" r="6" /><circle cx="1157" cy="510" r="6" /><circle cx="1448" cy="342" r="6" /></g>
              <path d="M835 660l25 14" stroke="#ddd" stroke-width="8" />
            </svg>

            <svg class="triad" viewBox="0 0 40 60">
              <path d="M8 37V18" stroke="#176117" stroke-width="4" /><path d="M8 8l5 9H3z" fill="#1f8a1f" />
              <path d="M8 37l15-8" stroke="#b01818" stroke-width="4" /><path d="M29 25l-10 1 4 8z" fill="#9c1414" />
              <path d="M8 37l15 8" stroke="#1c1cb8" stroke-width="4" /><path d="M30 49l-7-7-4 7z" fill="#2a2ad0" />
              <text x="4" y="7" fill="#0a7d0a">Y</text><text x="28" y="24" fill="#e01010">X</text><text x="27" y="53" fill="#1010d8">Z</text>
            </svg>

            <div class="taskpane">
              <button v-for="k in taskpane" :key="k" :class="{ active: k === 'i-ball' }" :aria-label="k"><svg class="i20"><use :href="'#' + k" /></svg></button>
            </div>

            <div class="osd">
              <svg viewBox="0 0 240 130" width="80" height="43">
                <defs>
                  <linearGradient id="rogW"><stop offset="0" stop-color="#fff" /><stop offset="1" stop-color="#8d8d8d" /></linearGradient>
                  <linearGradient id="rogR"><stop offset="0" stop-color="#e0605f" /><stop offset=".4" stop-color="#f3b3b2" /><stop offset="1" stop-color="#d9494a" /></linearGradient>
                </defs>
                <path d="M0 60Q15 90 45 98L35 88Q12 80 0 60zM35 68L60 92Q100 30 155 8 190 0 222 3 170 12 140 30 100 60 72 98L88 128 50 98z" fill="url(#rogW)" />
                <path d="M75 98Q130 40 236 22 235 35 225 40 150 50 100 96L160 112 205 62 140 85Q190 55 224 48 215 90 175 125 120 130 75 98z" fill="url(#rogR)" />
              </svg>
              <strong>REPUBLIC OF<br />GAMERS</strong>
              <p>Turn off, reposition, or replace<br />this picture with a custom image<br />via the OSD settings menu..</p>
            </div>
          </main>
        </div>

        <div class="doctabs">
          <span class="vcr">
            <button v-for="(d, i) in vcr" :key="i" :aria-label="'Tab scroll ' + i"><svg viewBox="0 0 12 12" width="12" height="12"><path :d="d" fill="#8c8c8c" /></svg></button>
          </span>
          <button class="active">Model</button>
          <button>3D Views</button>
          <button>Motion Study 1</button>
        </div>
      </div>

      <aside class="sidebar">
        <i class="handle" />
        <button v-for="r in sideIcons" :key="r" :class="{ hot: r === 'i-recall' }" :aria-label="r"><svg class="i20"><use :href="'#' + r" /></svg></button>
        <i class="rule" />
        <button class="bubble" aria-label="Expand"><svg viewBox="0 0 20 20" width="16" height="16"><path d="M13 3L5 10l8 7" fill="none" stroke="#999" stroke-width="2.500" /></svg></button>
      </aside>
    </div>

    <footer class="status">
      <span class="ver">SOLIDWORKS Premium 2020 SP0.0</span>
      <span class="editing">Editing Part</span>
      <svg class="i16 warn" viewBox="0 0 20 20">
        <path d="M1 12L7 1l6 11z" fill="#fbc91b" stroke="#7a4a00" /><path d="M7 5v4M7 10v1" stroke="#222" stroke-width="1.500" />
        <path d="M11 12q5-1 5-6h-3l4-5 3 5h-2q0 8-7 6z" fill="#222" /><path d="M2 19v-3M6 19v-4M10 19v-4M14 19v-5M18 19v-6" stroke="#27607f" stroke-width="2.500" />
      </svg>
      <span class="units">MMGS</span>
      <i class="up" />
      <svg class="i18" viewBox="0 0 20 20"><path d="M2 5l9-2 8 6-3 8-7 1-7-9z" fill="#e8e8e8" stroke="#333" stroke-width="1.200" /><path d="M3 9l7 7 7-1M6 7l4-1 4 4-4 2z" fill="none" stroke="#333" stroke-width="1.200" /></svg>
    </footer>

    <div class="taskbar">
      <button v-for="w in taskIcons" :key="w.icon" :class="{ on: w.on, run: w.run }" :aria-label="w.icon">
        <svg v-if="w.icon === 'sw'" class="i18" viewBox="0 0 20 20">
          <path d="M2 4l12-3 4 2v14l-4 2-12-2z" fill="#c8151b" /><path d="M9 3.500H5v3h3v3H4M11 3l1 6 2-4 1 4 2-6" fill="none" stroke="#fff" stroke-width="1.300" />
          <rect x="1" y="11" width="18" height="8" fill="#111" /><text class="badge" x="2" y="18">2020</text>
        </svg>
        <svg v-else-if="w.icon === 'zalo'" class="i18" viewBox="0 0 20 20">
          <rect x="1" y="1" width="18" height="18" rx="5" fill="#fff" /><path d="M1 12q2 6 9 7H6q-5 0-5-5z" fill="#0b68ff" /><text class="badge zalo" x="3" y="12">Zalo</text>
        </svg>
        <svg v-else :class="w.small ? 'i16' : 'i18'"><use :href="'#w-' + w.icon" /></svg>
      </button>
      <div class="tray">
        <svg viewBox="0 0 20 20" class="i14"><path d="M2 14l8-8 8 8" fill="none" stroke="#fff" stroke-width="1.800" /></svg>
        <svg class="i16"><use href="#s-v" /></svg>
        <svg class="i18"><use href="#s-net" /></svg>
        <svg class="i18"><use href="#s-vol" /></svg>
        <svg class="i18"><use href="#s-cloud" /></svg>
        <span>ENG</span>
        <span class="clock">4:39 PM</span>
        <svg class="i18 note"><use href="#s-note" /></svg>
      </div>
    </div>
  </div>
</template>

<script setup>
const menus = ['File', 'Edit', 'View', 'Insert', 'Tools', 'PhotoView 360', 'Window', 'Help']

const quick = [
  { icon: 'i-home', label: 'Home' },
  { icon: 'i-new', label: 'New', drop: true },
  { icon: 'i-open', label: 'Open', drop: true },
  { icon: 'i-save', label: 'Save', drop: true },
  { icon: 'i-print', label: 'Print', drop: true },
  { icon: 'i-undo', label: 'Undo', drop: true },
  { icon: 'i-cursor', label: 'Select', drop: true },
  { icon: 'i-light', label: 'Rebuild' },
  { icon: 'i-props', label: 'File Properties' },
  { icon: 'i-gear', label: 'Options', drop: true }
]

const ribbon = [
  [
    { icon: 'i-editapp', text: 'Edit Appearance', w: 61 },
    { icon: 'i-copyapp', text: 'Copy Appearance', w: 61, off: true },
    { icon: 'i-pasteapp', text: 'Paste Appearance', w: 61, off: true },
    { icon: 'i-editscene', text: 'Edit Scene', w: 30 },
    { icon: 'i-editdecal', text: 'Edit Decal', w: 28 },
    { icon: 'i-target', text: 'Display States Target', w: 37 }
  ],
  [
    { icon: 'p-window', text: 'Integrated Preview', w: 54 },
    { icon: 'i-prevwin', text: 'Preview Window', w: 44 },
    { icon: 'i-final', text: 'Final Render', w: 37 },
    { icon: 'i-region', text: 'Render Region', w: 37 },
    { icon: 'i-illum', text: 'Scene Illumination Proof Sheet', w: 62 },
    { icon: 'i-options', text: 'Options', w: 42 },
    { icon: 'i-schedule', text: 'Schedule Render', w: 47 },
    { icon: 'i-recall', text: 'Recall Last Render', w: 36 }
  ]
]
const sideIcons = ribbon.flat().map((r) => r.icon)

const tabs = [
  { name: 'Features', w: 60 }, { name: 'Sketch', w: 56 }, { name: 'Sketch Ink', w: 70 }, { name: 'Surfaces', w: 60 },
  { name: 'Sheet Metal', w: 78 }, { name: 'Weldments', w: 76 }, { name: 'Mold Tools', w: 74 }, { name: 'Direct Editing', w: 87 },
  { name: 'Evaluate', w: 60 }, { name: 'MBD Dimensions', w: 107 }, { name: 'Render Tools', w: 88 },
  { name: 'SOLIDWORKS Add-Ins', w: 133 }, { name: 'MBD', w: 56 }
]

const ptabs = ['i-part', 'i-panel', 'i-config', 'i-cross', 'i-appear']

// name, icon, expandable
const features = [
  ['Boss-Extrude10', 'boss', 1], ['Cut-Extrude4', 'cut', 1], ['Boss-Extrude11', 'boss', 1], ['Boss-Extrude12', 'boss', 1],
  ['Boss-Extrude13', 'boss', 1], ['Boss-Extrude14', 'boss', 1], ['Boss-Extrude15', 'boss', 1], ['Fillet3', 'fillet', 0],
  ['Boss-Extrude16', 'boss', 1], ['Split Line1', 'split', 1], ['Fillet4', 'fillet', 0], ['Plane3', 'plane', 0],
  ['Sweep1', 'sweep', 1], ['Plane4', 'plane', 0], ['Sweep2', 'sweep', 1], ['Boss-Extrude17', 'boss', 1],
  ['Sketch-Pattern5', 'skpat', 0], ['Mirror1', 'mirror', 0], ['Sweep3', 'sweep', 1], ['Sweep4', 'sweep', 1],
  ['Boss-Extrude18', 'boss', 1], ['Sketch-Pattern8', 'skpat', 0], ['Mirror2', 'mirror', 0], ['Boss-Extrude20', 'boss', 1],
  ['Plane5', 'plane', 0], ['Surface-Plane1', 'surf', 1], ['Thicken3', 'thicken', 0], ['Boss-Extrude22', 'boss', 1],
  ['Boss-Extrude23', 'boss', 1], ['Boss-Extrude24', 'boss', 1], ['Boss-Extrude25', 'boss', 1], ['Boss-Extrude26', 'boss', 1],
  ['Boss-Extrude27', 'boss', 1], ['LPattern3', 'lpat', 0], ['Plane6', 'plane', 0], ['Plane7', 'plane', 0]
].map(([name, icon, open]) => ({ name, icon, open }))

const views = [
  { icon: 'v-cube' }, { icon: 'v-normal' }, { icon: 'v-fit' }, { icon: 'v-area' }, { icon: 'v-prev' }, { icon: 'v-section' },
  { icon: 'v-annot' }, { icon: 'v-orient', drop: true }, { icon: 'v-style', drop: true }, { icon: 'v-eye', drop: true },
  { icon: 'i-editapp' }, { icon: 'i-scene', drop: true }, { icon: 'v-monitor', drop: true }
]

const taskpane = ['i-home', 'k-books', 'k-folder', 'k-palette', 'i-ball', 'i-panel', 'k-chat']

const vcr = ['M2 1h1v10h-1zM10 1v10l-6-5z', 'M9 1v10l-6-5z', 'M3 1v10l6-5z', 'M9 1h1v10h-1zM2 1v10l6-5z']

const taskIcons = [
  { icon: 'start' }, { icon: 'search' }, { icon: 'sw', on: true, run: true }, { icon: 'teams' }, { icon: 'explorer', run: true },
  { icon: 'keys' }, { icon: 'mail' }, { icon: 'tele', small: true }, { icon: 'dots' }, { icon: 'edge' },
  { icon: 'chrome', small: true, run: true }, { icon: 'store' }, { icon: 'm' }, { icon: 'coc', small: true }, { icon: 'zalo' }, { icon: 'blue' }
]

// Every mast carries the same rig; a sail gets wider towards the deck.
const masts = [
  { x: 582, y: -335, top: 412, foot: 1622 },
  { x: 291, y: -165, top: 353, foot: 1612 },
  { x: 0, y: 0, top: 412, foot: 1612 }
]

const sails = [5, 4, 3, 2, 1, 0].map((n) => {
  const l = (x, y) => `${x - 12 * n} ${y + 159 * n}`
  const r = (x, y) => `${x + 12 * n} ${y + 174.5 * n}`
  return {
    n,
    ex: 783 + 12 * n,
    ey: 644 + 174.5 * n,
    spar: n ? `M${r(700, 597)}L${r(782, 643)}` : 'M542 506L782 643',
    cloth: n < 5 && `M${l(557, 540)}C${l(500, 560)} ${l(453, 600)} ${l(453, 655)}L${l(454, 690)}Q${l(455, 702)} ${l(465, 706)}L${r(652, 812)}L${r(650, 770)}C${r(655, 720)} ${r(690, 672)} ${r(757, 652)}z`,
    seam: `M${l(453, 668)}L${r(650, 779)}`,
    inner: `M${r(663, 725)}L${r(770, 790)}Q${r(700, 838)} ${r(652, 810)}Q${r(646, 770)} ${r(663, 725)}z`
  }
})

const spars = [0, 1, 2, 3, 4, 5].map((n) => ({ x: 783 + 12 * n, y: -406 + 174.5 * n, lx: 545 - 12 * n, ly: -547 + 159 * n }))

const ropes = [
  ...spars.flatMap((s) => [
    `M${s.x - 8} ${s.y + 8}L1150 510`, `M${s.x + 10} ${s.y + 4}L1158 506`,
    `M${s.x + 283} ${s.y - 157}L1440 342`, `M${s.x + 301} ${s.y - 161}L1449 338`
  ]),
  ...spars.slice(0, 5).flatMap((s, i) => [
    `M${s.x + 572} ${s.y - 327}L${1562 + i * 4} 50`, `M${s.x + 592} ${s.y - 331}L${1568 + i * 4} 40`
  ]),
  'M1432 128L1595 115 1434 144L1595 122',
  // stays between the mast heads and down to bow and stern
  'M707 -645L958 -836', 'M1000 -860L1250 -945', 'M1290 -952L1550 -462', 'M1547 -465L1547 -255 1565 40', 'M1548 -265Q1600 -60 1580 70',
  'M1483 -575V-300L1575 60',
  'M668 -620L86 345', 'M672 -618L103 345', 'M675 -615L325 35', 'M678 -612L355 65',
  'M205 180L365 290 840 665', 'M365 290L447 335 862 678', 'M400 310L855 670',
  'M72 370V608', 'M97 372L85 605', 'M80 610L415 505', 'M110 550L412 493', 'M115 558L420 610 865 680', 'M85 616L420 640 862 676',
  'M100 345L345 285', 'M145 385L165 335M190 415L215 352'
]

const farRopes = [
  ...spars.flatMap((s) => [
    `M${s.lx} ${s.ly}L795 262`, `M${s.lx + 120} ${s.ly + 40}L785 262`, `M${s.lx + 291} ${s.ly - 165}L1082 85`, `M${s.lx + 411} ${s.ly - 125}L1072 85`
  ]),
  'M1340 -100L1560 60', 'M1395 -125L1565 50', 'M1430 -145L1570 40', 'M1350 -90L1540 60', 'M1450 -160L1575 60'
]
</script>

<style scoped>
.app {
  height: 100vh;
  display: flex;
  flex-direction: column;
  overflow: hidden;
  background: #f7f7f7;
  color: #111;
  font-family: "Open Sans", "Noto Sans", sans-serif;
  font-size: 11px;
  line-height: 13px;
}

.defs {
  position: absolute;
}

button {
  font: inherit;
  color: inherit;
  background: none;
  border: 0;
  padding: 0;
  margin: 0;
  display: flex;
  align-items: center;
  justify-content: center;
}

input {
  font: inherit;
  border: 0;
  padding: 0;
  background: none;
  min-width: 0;
  outline: 0;
}

svg { display: block; flex: none; }
.i14 { width: 14px; height: 14px; }
.i16 { width: 16px; height: 16px; }
.i18 { width: 18px; height: 18px; }
.i20 { width: 20px; height: 20px; }

.caret {
  flex: none;
  border: 3px solid transparent;
  border-top: 4px solid #333;
  border-bottom: 0;
}

.dot {
  width: 4px;
  height: 4px;
  border: 1px solid #888;
  border-radius: 50%;
  background: #ccc;
}

/* title bar */
.titlebar {
  height: 30px;
  flex: none;
  display: flex;
  align-items: center;
  border-bottom: 1px solid #828282;
}

.logo {
  position: relative;
  z-index: 2;
  align-self: flex-start;
  box-sizing: border-box;
  width: 145px;
  height: 34px;
  margin-left: 10px;
  padding-left: 4px;
  display: flex;
  align-items: flex-start;
  border: 1px solid #8c8c8c;
  border-top: 0;
  background: linear-gradient(135deg, #fff 40%, #d4d4d4);
  color: #d9231f;
}

.ds { width: 34px; height: 32px; }

.brand {
  font-family: Lato, sans-serif;
  font-style: italic;
  font-size: 16px;
  line-height: 20px;
  margin-top: 9px;
}

.brand b { font-weight: 900; }

.menu {
  display: flex;
  align-items: center;
  gap: 17px;
  width: 426px;
  padding-left: 28px;
  height: 30px;
  border-right: 2px solid #b4b4b4;
  white-space: nowrap;
}

.menu button:last-child { margin-left: 4px; }

.quick {
  display: flex;
  align-items: center;
  padding-left: 11px;
}

.qbtn { width: 26px; height: 26px; }
.qdrop { width: 14px; height: 26px; }
.qbtn.sel { box-sizing: border-box; background: #b4b4b4; border: 1px solid #777; }
.qdrop.boxed { box-sizing: border-box; background: #fff; border: 1px solid #777; border-left: 0; }

.doc-title { flex: 1; text-align: center; }

.search {
  box-sizing: border-box;
  width: 202px;
  height: 23px;
  display: flex;
  align-items: center;
  padding: 0 4px 0 5px;
  gap: 5px;
  border: 1px solid #111;
  background: #ebedf2;
}

.search input { flex: 1; }
.search input::placeholder { color: #6a6a6a; opacity: 1; }

.winctl {
  display: flex;
  align-items: center;
  width: 147px;
  justify-content: space-between;
  padding-right: 6px;
  box-sizing: border-box;
  padding-left: 9px;
  color: #333;
}

.help { font-size: 16px; font-weight: 600; }

/* ribbon */
.ribbon {
  height: 86px;
  flex: none;
  display: flex;
  padding-left: 11px;
  border-bottom: 1px solid #828282;
}

.rgroup {
  display: flex;
  gap: 10px;
  align-items: flex-start;
  padding-top: 18px;
}

.rgroup + .rgroup {
  position: relative;
  padding-left: 13px;
}

.rgroup + .rgroup::before {
  content: "";
  position: absolute;
  left: 6px;
  top: 6px;
  bottom: 3px;
  width: 1px;
  background: #b9b9b9;
}

.rbtn { flex-direction: column; }
.rbtn span { text-align: center; }
.rbtn:disabled { color: #b0b0b0; }

/* body */
.main { flex: 1; min-height: 0; display: flex; }
.work { flex: 1; min-width: 0; display: flex; flex-direction: column; }

.cmdtabs {
  height: 22px;
  flex: none;
  display: flex;
  background: #fff;
}

.cmdtabs > button {
  box-sizing: border-box;
  background: #d2d2d2;
  border-right: 1px solid #828282;
  border-bottom: 1px solid #828282;
  color: #222;
  white-space: nowrap;
}

.cmdtabs > button.active {
  background: #fff;
  border-bottom-color: #fff;
  font-weight: 700;
  color: #333;
}

.docctl {
  margin-left: auto;
  padding: 8px 12px 0 0;
  display: flex;
  gap: 12px;
  color: #a0a0a0;
}

.mid { flex: 1; min-height: 0; display: flex; }

/* feature manager */
.panel {
  position: relative;
  box-sizing: border-box;
  width: 246px;
  display: flex;
  flex-direction: column;
  border-right: 1px solid #828282;
}

.grip {
  height: 19px;
  box-sizing: border-box;
  margin-bottom: 5px;
  margin-right: 4px;
  display: flex;
  align-items: center;
  justify-content: center;
  padding-top: 4px;
  border-top: 1px solid #9fc0c0;
  border-bottom: 1px solid #c4c4c4;
}

.ptabs {
  height: 26px;
  flex: none;
  display: flex;
  margin-left: 2px;
}

.ptabs button {
  box-sizing: border-box;
  width: 40px;
  background: #d2d2d2;
  border: 1px solid #828282;
  border-left: 0;
}

.ptabs button.active { background: #f7f7f7; border-bottom-color: #f7f7f7; }

.more {
  flex: 1;
  display: flex;
  align-items: center;
  justify-content: flex-end;
  padding-right: 6px;
  margin-right: 2px;
  border-bottom: 1px solid #aaa;
}

.filter {
  box-sizing: border-box;
  height: 26px;
  margin: 0 5px;
  display: flex;
  align-items: center;
  border: 1px solid #bbb;
}

.filter input { flex: 1; }

.treewrap { flex: 1; min-height: 0; display: flex; border-left: 1px solid #bbb; }

.tree {
  flex: 1;
  margin: 0;
  padding: 0;
  overflow: hidden;
  list-style: none;
}

.tree li {
  height: 22px;
  display: flex;
  align-items: center;
  padding-left: 9px;
}

.tree span { margin-left: 5px; }

.exp {
  flex: none;
  border: 4px solid transparent;
  border-left: 4px solid #555;
  border-right: 0;
  margin-right: 12px;
}

.exp.none { visibility: hidden; }

.vbar {
  width: 15px;
  margin-right: 2px;
  padding: 5px 0;
  display: flex;
  flex-direction: column;
  align-items: center;
  background: #efefef;
}

.vthumb {
  width: 15px;
  height: 134px;
  margin-top: 50px;
  margin-bottom: auto;
  background: #cbcbcb;
}

.hbar {
  height: 16px;
  flex: none;
  display: flex;
  align-items: center;
  justify-content: space-between;
  padding: 0 22px 0 5px;
  background: #efefef;
}

.hthumb { height: 15px; width: 171px; margin: 0 auto 0 5px; background: #cbcbcb; }
.pfoot { height: 5px; flex: none; box-sizing: border-box; border-top: 1px solid #fff; border-bottom: 1px solid #c4c4c4; }

.splitter {
  position: absolute;
  z-index: 2;
  left: 245px;
  top: 407px;
  box-sizing: border-box;
  width: 9px;
  height: 39px;
  background: #f7f7f7;
  border: 1px solid #828282;
  border-left: 0;
}

/* graphics area */
.canvas {
  position: relative;
  flex: 1;
  overflow: hidden;
  background: #fff;
}

.viewbar {
  display: flex;
  justify-content: center;
  align-items: center;
  padding: 6px 4px 0 0;
}

.viewbar button { width: 26px; opacity: 0.85; }
.viewbar .caret { margin: 0 4px; }
.caret.grey { border-top-color: #999; }

.annot-a {
  font-family: "Liberation Serif", serif;
  font-size: 12px;
  font-weight: 700;
  fill: #3f95c0;
}

.ship {
  position: absolute;
  left: 458px;
  top: 127px;
  width: 530px;
  height: 710px;
}

.triad {
  position: absolute;
  left: 32px;
  bottom: 36px;
  width: 40px;
  height: 60px;
  overflow: visible;
  font-family: "Liberation Sans", sans-serif;
  font-size: 10px;
}

.taskpane {
  position: absolute;
  right: 0;
  top: 53px;
  border: 1px solid #828282;
  border-right: 0;
  border-top: 0;
}

.taskpane button {
  box-sizing: border-box;
  width: 25px;
  height: 24px;
  background: #d2d2d2;
  border-top: 1px solid #828282;
}

.taskpane button.active { background: #fff; }

.osd {
  position: absolute;
  right: 10px;
  top: 255px;
  box-sizing: border-box;
  width: 167px;
  height: 167px;
  padding-top: 24px;
  display: flex;
  flex-direction: column;
  align-items: center;
  background: #666;
  color: #fff;
}

.osd strong {
  margin-top: 8px;
  font-family: "DejaVu Sans", sans-serif;
  font-size: 10px;
  line-height: 9px;
  text-align: center;
}

.osd p {
  margin: 17px 0 0;
  width: 134px;
  font-family: "Noto Sans", sans-serif;
  font-size: 9px;
  line-height: 12px;
  color: #c4c4c4;
  white-space: nowrap;
}

.doctabs {
  height: 16px;
  flex: none;
  box-sizing: border-box;
  display: flex;
  border-top: 1px solid #828282;
  border-bottom: 1px solid #828282;
  padding-left: 27px;
}

.doctabs > button {
  align-items: flex-start;
  line-height: 12px;
  padding: 0 10px;
  background: #d2d2d2;
  border-right: 1px solid #828282;
}

.doctabs > button.active { background: #fff; font-weight: 700; padding: 0 12px; }
.vcr { display: flex; }
.vcr button { width: 16px; background: #b9b9b9; border-right: 1px solid #999; box-sizing: border-box; }

/* right toolbar */
.sidebar {
  position: relative;
  width: 34px;
  flex: none;
  overflow: hidden;
  display: flex;
  flex-direction: column;
  align-items: center;
  padding-left: 3px;
  box-sizing: border-box;
}

.handle { width: 26px; border-top: 2px dotted #999; margin: 3px 0 8px; }

.sidebar button { width: 26px; height: 26px; flex: none; box-sizing: border-box; }
.sidebar button.hot { background: #fff; border: 1px solid #999; }
.rule { align-self: stretch; border-top: 1px solid #828282; margin-top: 7px; }

.sidebar button.bubble {
  position: absolute;
  right: -21px;
  bottom: 35px;
  width: 42px;
  height: 42px;
  justify-content: flex-start;
  padding-left: 10px;
  border-radius: 50%;
  border: 1px solid #3d6a80;
  background: #000;
}

/* status bar */
.status {
  height: 18px;
  flex: none;
  display: flex;
  align-items: center;
  padding: 0 2px 0 1px;
}

.ver { margin-right: auto; }
.warn { margin: 0 74px 0 29px; }
.units { margin-right: 18px; }
.up { border: 3px solid transparent; border-bottom: 4px solid #333; border-top: 0; margin-right: 28px; }

/* taskbar */
.taskbar {
  height: 30px;
  flex: none;
  display: flex;
  background: linear-gradient(90deg, #223a41 0, #20363f 40%, #1b2844 75%, #1a2742);
  color: #fff;
}

.taskbar > button { width: 37px; border-bottom: 2px solid transparent; border-top: 2px solid transparent; box-sizing: border-box; }
.taskbar > button.on { background: #4c6067; }
.taskbar > button.run { border-bottom-color: #76b9ed; }

.badge {
  font-family: "Liberation Sans", sans-serif;
  font-size: 7px;
  font-weight: 700;
  fill: #fff;
}

.badge.zalo { fill: #0b68ff; }

.tray {
  margin-left: auto;
  display: flex;
  align-items: center;
  gap: 8px;
  padding-right: 6px;
}

.clock { margin: 0 13px 0 8px; }
.note { margin-right: 18px; }
</style>

<style>
body {
  margin: 0;
}
</style>
